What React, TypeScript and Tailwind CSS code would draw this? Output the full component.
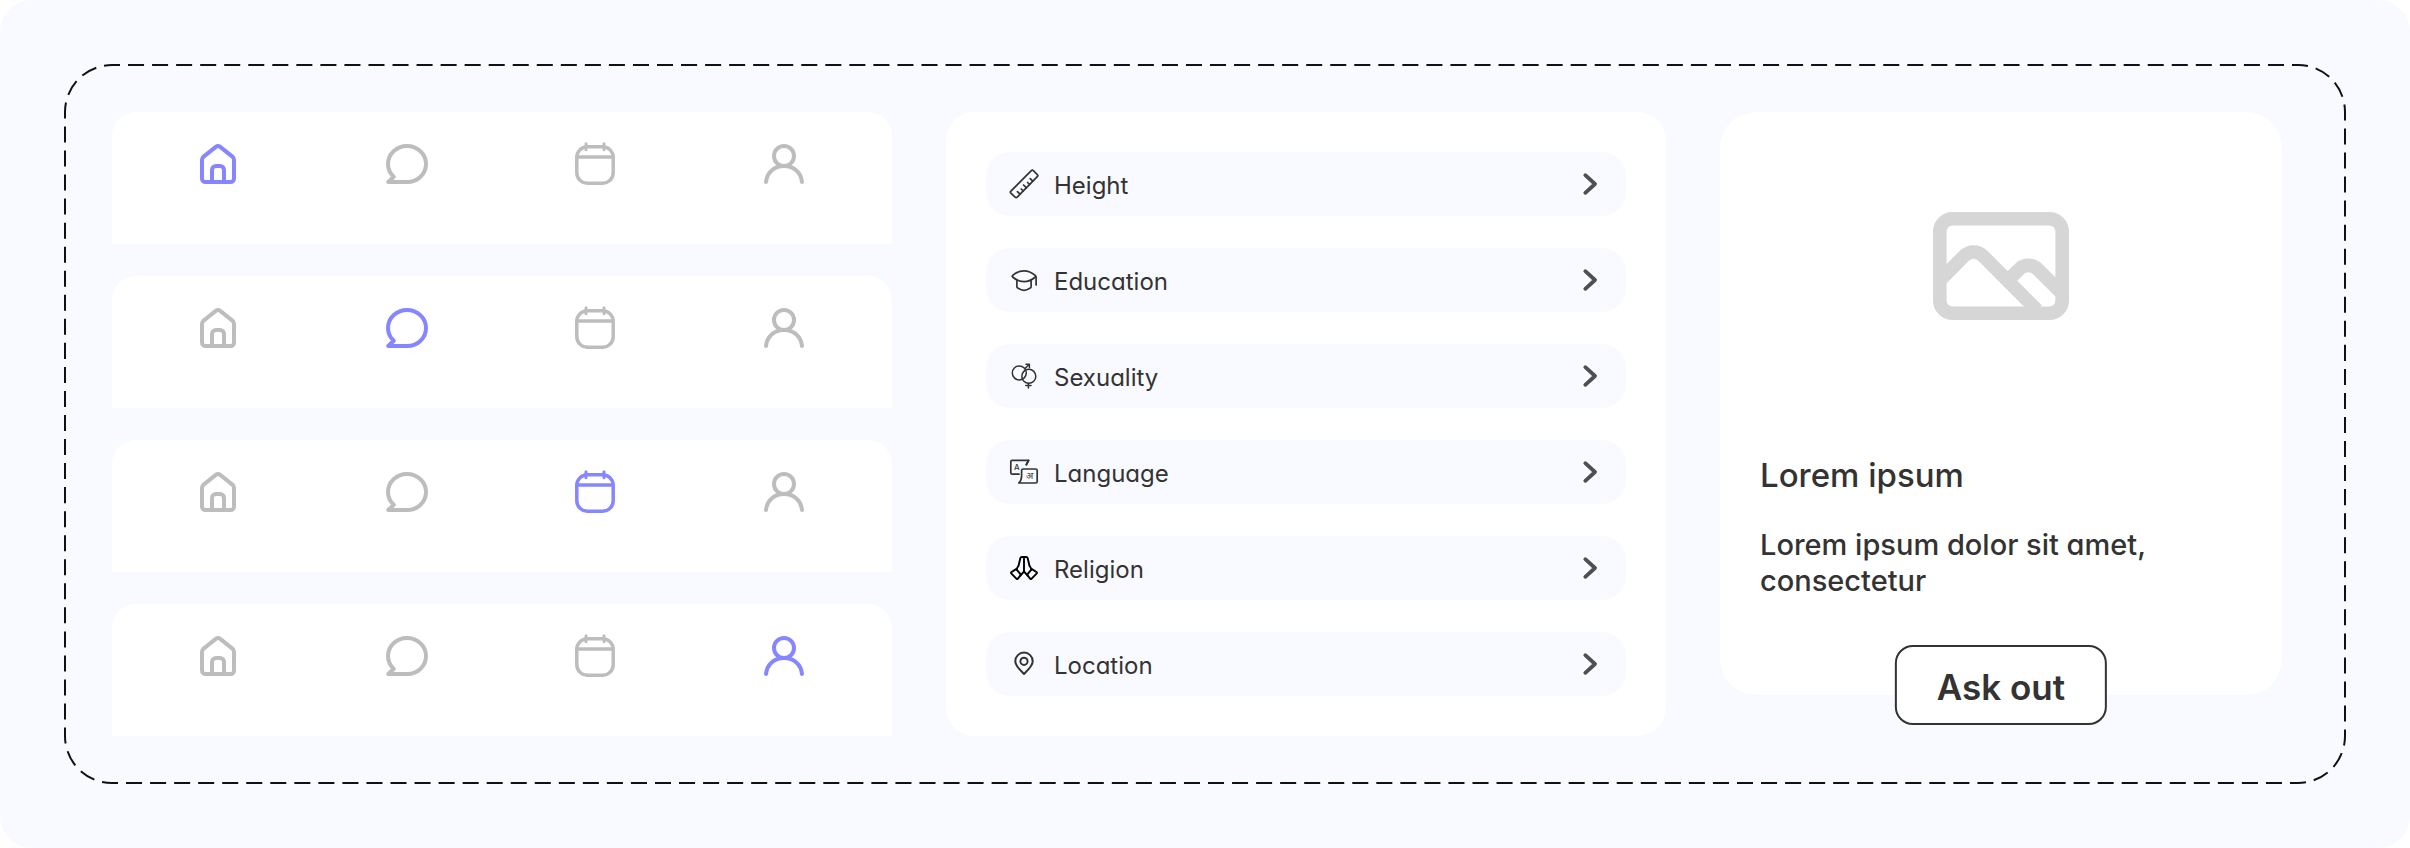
import { useState } from "react";
import type { ReactNode } from "react";

type IconProps = { children: ReactNode };

function NavIcon({ children }: IconProps) {
  return (
    <svg
      viewBox="0 0 48 48"
      className="size-12"
      fill="none"
      stroke="currentColor"
      strokeWidth="4"
      strokeLinecap="round"
      strokeLinejoin="round"
      aria-hidden="true"
    >
      {children}
    </svg>
  );
}

function RowIcon({ children }: IconProps) {
  return (
    <svg
      viewBox="0 0 32 32"
      className="size-8 shrink-0"
      fill="none"
      stroke="currentColor"
      strokeWidth="1.700"
      strokeLinecap="round"
      strokeLinejoin="round"
      aria-hidden="true"
    >
      {children}
    </svg>
  );
}

const tabs = [
  {
    id: "Home",
    icon: (
      <NavIcon>
        <path d="M8 20c0-1.500.5-2.500 1.600-3.400L21.800 6.900c1.400-1.100 3-1.100 4.400 0l12.200 9.700c1.100.9 1.600 1.900 1.600 3.400V38.500c0 2-1.500 3.500-3.500 3.500h-25C9.500 42 8 40.500 8 38.500z" />
        <path d="M18 41V30c0-2.400 1.600-4 4-4h4c2.400 0 4 1.600 4 4v11" />
      </NavIcon>
    ),
  },
  {
    id: "Chat",
    icon: (
      <NavIcon>
        <path d="M24.500 42H5.200L10.800 36.800C7.200 33.600 5 29 5 24C5 14 13.500 6 24 6S43 14 43 24S34.700 42 24.500 42z" />
      </NavIcon>
    ),
  },
  {
    id: "Calendar",
    icon: (
      <NavIcon>
        <g strokeWidth="3.500">
          <rect x="5.800" y="6.800" width="36.400" height="36.400" rx="10.500" />
          <path d="M6.500 17h35" />
          <path d="M15 3.700v6M33 3.700v6" strokeWidth="3" />
        </g>
      </NavIcon>
    ),
  },
  {
    id: "Profile",
    icon: (
      <NavIcon>
        <circle cx="24" cy="16" r="10" />
        <path d="M6 42C7 32.500 14 26 24 26s17 6.500 18 16" />
      </NavIcon>
    ),
  },
];

const rows = [
  {
    label: "Height",
    icon: (
      <RowIcon>
        <path d="M23.300 2.700a1.500 1.500 0 0 1 2.100 0L29.300 6.600a1.500 1.500 0 0 1 0 2.100L9.200 29.200a1.500 1.500 0 0 1-2.100 0L2.900 25.200a1.500 1.500 0 0 1 0-2.100z" />
        <path d="M12 26.200l-2.600-2.600M15.200 23l-2-2M18.400 19.800l-2.800-2.800M21.600 16.500l-2-2M24.800 13.200l-2.600-2.600" />
      </RowIcon>
    ),
  },
  {
    label: "Education",
    icon: (
      <RowIcon>
        <path d="M16 6.800C12 6.800 7.500 9 4.700 11.300q-1 .9 0 1.700C7.500 15.500 12 17.700 16 17.700s8.500-2.200 11.300-4.700q1-.8 0-1.700C24.500 9 20 6.800 16 6.800z" />
        <path d="M8.900 16.200v6.600q0 .8.800 1.200C12 25.400 14 26.300 16 26.300s4-.9 6.300-2.300q.8-.4.800-1.200v-6.600M28.100 13v8" />
      </RowIcon>
    ),
  },
  {
    label: "Sexuality",
    icon: (
      <RowIcon>
        <g strokeWidth="1.500">
          <circle cx="11.300" cy="12.900" r="7" />
          <circle cx="20.800" cy="16.300" r="7" />
          <path d="M17 8.500L21 4.500M18 4.200h3.400v3.600M20.400 23.500v4.500M17.800 25.500h5.200" />
        </g>
      </RowIcon>
    ),
  },
  {
    label: "Language",
    icon: (
      <RowIcon>
        <path d="M11 18.200H4.200q-1.400 0-1.400-1.400V5.800q0-1.400 1.400-1.400H20.800L18.400 8.600" />
        <path d="M20.300 4.600L18.300 8.600" strokeWidth="2" />
        <path d="M10.800 27q2.800-2.800 2.800-7v-5.400q0-1.600 1.600-1.600h12.400q1.600 0 1.600 1.600v10.800q0 1.600-1.600 1.600z" />
        <g fill="currentColor" stroke="none" fontFamily="Inter, sans-serif" textAnchor="middle">
          <text x="8.800" y="14" fontSize="8" fontWeight="500">A</text>
          <text x="21.500" y="23" fontSize="9.500">अ</text>
        </g>
      </RowIcon>
    ),
  },
  {
    label: "Religion",
    icon: (
      <RowIcon>
        <g stroke="#000000" strokeWidth="1.900">
          <path d="M16 5v14.500L12.300 23.600M16 19.500l3.700 4.100" />
          <path d="M16 5h-2.200q-1.200 0-1.500 1.200L10.600 13.500L8.400 17.400M16 5h2.200q1.200 0 1.500 1.200L21.400 13.500L23.600 17.400" />
          <path d="M7.600 17.400L3.300 20.200q-.6.500-.1 1.100L8.600 26.800q.6.500 1.100 0L12.500 23.300q.3-.6-.1-1.100L8.700 17.600q-.5-.5-1.100-.2z" />
          <path d="M24.400 17.400L28.700 20.200q.6.500.1 1.100L23.400 26.800q-.6.500-1.100 0L19.500 23.300q-.3-.6.100-1.100L23.300 17.600q.5-.5 1.100-.2z" />
        </g>
      </RowIcon>
    ),
  },
  {
    label: "Location",
    icon: (
      <RowIcon>
        <g strokeWidth="2">
          <path d="M16 26C14 23.600 7.300 18.500 7.300 13.200a8.700 8.600 0 0 1 17.400 0C24.700 18.500 18 23.600 16 26z" />
          <circle cx="16" cy="13.300" r="3.600" />
        </g>
      </RowIcon>
    ),
  },
];

function TabBar({ initial }: { initial: string }) {
  const [active, setActive] = useState(initial);
  return (
    <nav
      aria-label={initial}
      className="flex justify-between rounded-t-3xl bg-white pt-7 pr-[84px] pb-14 pl-[82px]"
    >
      {tabs.map((tab) => (
        <button
          key={tab.id}
          type="button"
          aria-label={tab.id}
          aria-pressed={tab.id === active}
          onClick={() => setActive(tab.id)}
          className={tab.id === active ? "text-[#8686ff]" : "text-[#bdbdbd]"}
        >
          {tab.icon}
        </button>
      ))}
    </nav>
  );
}

function OptionList() {
  return (
    <ul className="flex flex-col gap-8 rounded-[28px] bg-white p-10">
      {rows.map((row) => (
        <li key={row.label}>
          <button
            type="button"
            className="flex h-16 w-full items-center gap-3.5 rounded-3xl bg-[#f9faff] pr-6 pl-[22px] text-left"
          >
            {row.icon}
            <span className="grow pt-1 text-2xl">{row.label}</span>
            <svg
              viewBox="0 0 24 24"
              className="size-6 shrink-0 text-[#4f4f4f]"
              fill="none"
              stroke="currentColor"
              strokeWidth="3.800"
              strokeLinecap="round"
              strokeLinejoin="round"
              aria-hidden="true"
            >
              <path d="M7.300 3.200L17 12L7.300 20.800" />
            </svg>
          </button>
        </li>
      ))}
    </ul>
  );
}

function ProfileCard() {
  return (
    <article className="relative self-start rounded-[36px] bg-white px-10 pt-[100px] pb-24">
      <svg
        viewBox="0 0 136 108"
        className="mx-auto w-[136px]"
        fill="none"
        stroke="#d6d6d6"
        strokeWidth="13.600"
        aria-hidden="true"
      >
        <rect x="6.800" y="6.800" width="122.400" height="94.400" rx="12.800" />
        <path d="M7 68.200L31.400 43.800A13 13 0 0 1 49.800 43.800L104 98" />
        <path d="M78 65.400L86.200 57.200A13 13 0 0 1 104.700 57.200L128 80.500" />
      </svg>
      <h2 className="mt-[135px] text-[33px] leading-10 font-medium">Lorem ipsum</h2>
      <p className="mt-8 text-[29px] leading-9 font-medium">
        Lorem ipsum dolor sit amet, consectetur
      </p>
      <button
        type="button"
        className="absolute -bottom-[30px] left-1/2 h-20 -translate-x-1/2 rounded-[18px] border-2 border-[#333333] bg-white px-10 pt-1 text-[35px] font-semibold whitespace-nowrap"
      >
        Ask out
      </button>
    </article>
  );
}

export default function App() {
  return (
    <main className="rounded-[32px] bg-[#f9faff] p-16 font-['Inter',sans-serif] text-[#333333] [font-feature-settings:'cv11']">
      <div className="relative py-12 pr-16 pl-12">
        <svg className="pointer-events-none absolute inset-0 size-full" aria-hidden="true">
          <rect
            x="1"
            y="1"
            rx="47"
            pathLength="5904"
            className="h-[calc(100%-2px)] w-[calc(100%-2px)]"
            fill="none"
            stroke="#111111"
            strokeWidth="2"
            strokeDasharray="16 8"
            strokeDashoffset="8"
          />
        </svg>
        <div className="grid grid-cols-[780fr_720fr_562fr] gap-[54px]">
          <section className="flex flex-col gap-8">
            {tabs.map((tab) => (
              <TabBar key={tab.id} initial={tab.id} />
            ))}
          </section>
          <OptionList />
          <ProfileCard />
        </div>
      </div>
    </main>
  );
}
